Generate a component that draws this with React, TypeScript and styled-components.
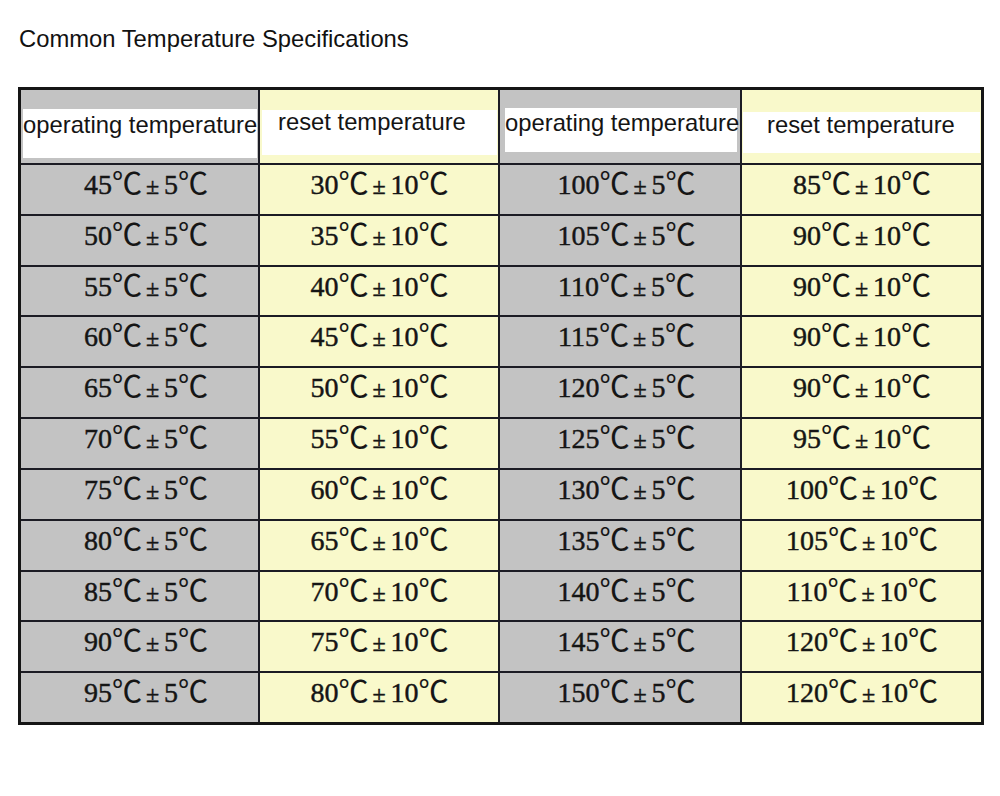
import React from 'react';
import styled, { createGlobalStyle } from 'styled-components';

const GlobalStyle = createGlobalStyle`
  html, body {
    margin: 0;
    padding: 0;
    background: #ffffff;
  }
  body {
    font-family: "Liberation Sans", Arial, sans-serif;
    color: #111111;
  }
`;

const Page = styled.div`
  width: 1000px;
  height: 796px;
  padding: 25px 0 0 19px;
  box-sizing: border-box;
`;

const Title = styled.h1`
  margin: 0;
  font-family: "Liberation Sans", Arial, sans-serif;
  font-weight: 400;
  font-size: 23.8px;
  line-height: 28px;
  color: #111111;
`;

const Frame = styled.div`
  margin: 34px 0 0 -1px;
  width: 966px;
  height: 638px;
  box-sizing: border-box;
  border: 3px solid #151515;
  background: #1c1c24;
  display: grid;
  grid-template-columns: 237px 238px 240px 1fr;
  grid-template-rows: 73px repeat(11, 1fr);
  gap: 2px;
`;

const HeadCell = styled.div<{ $tone: 'gray' | 'yellow' }>`
  background: ${p => (p.$tone === 'gray' ? '#c3c3c3' : '#f9f9cb')};
  display: flex;
  flex-direction: column;
`;

const Label = styled.div<{ $box: [number, number, number, number]; $pad: [number, number] }>`
  margin: ${p => `${p.$box[0]}px ${p.$box[1]}px ${p.$box[2]}px ${p.$box[3]}px`};
  flex: 1;
  background: #ffffff;
  font-family: "Liberation Sans", Arial, sans-serif;
  font-size: 23.8px;
  line-height: 20px;
  white-space: nowrap;
  padding: ${p => `${p.$pad[0]}px 0 0 ${p.$pad[1]}px`};
  color: #141414;
`;

const Cell = styled.div<{ $tone: 'gray' | 'yellow'; $shift: number }>`
  background: ${p => (p.$tone === 'gray' ? '#c3c3c3' : '#f9f9cb')};
  display: flex;
  justify-content: center;
  align-items: flex-start;
  padding: 2px 0 0 ${p => p.$shift}px;
  box-sizing: border-box;
  font-family: "Liberation Serif", "Times New Roman", serif;
  font-size: 28px;
  line-height: 28px;
  color: #151515;
  -webkit-text-stroke: 0.45px #151515;
  white-space: nowrap;
`;

const Deg = styled.span`
  font-family: "Noto Sans CJK SC", sans-serif;
  font-weight: 400;
  font-size: 30px;
  letter-spacing: -1px;
  -webkit-text-stroke: 0.1px #151515;
`;

const PlusMinus = styled.span`
  font-size: 24px;
  margin: 0 5px;
`;

type Col = {
  label: string;
  tone: 'gray' | 'yellow';
  box: [number, number, number, number];
  pad: [number, number];
  shift: number;
  tol: number;
  values: number[];
};

const columns: Col[] = [
  {
    label: 'operating temperature',
    tone: 'gray',
    box: [19, 1, 5, 2],
    pad: [6, 0],
    shift: 12,
    tol: 5,
    values: [45, 50, 55, 60, 65, 70, 75, 80, 85, 90, 95],
  },
  {
    label: 'reset temperature',
    tone: 'yellow',
    box: [20, 1, 8, 2],
    pad: [2, 16],
    shift: 0,
    tol: 10,
    values: [30, 35, 40, 45, 50, 55, 60, 65, 70, 75, 80],
  },
  {
    label: 'operating temperature',
    tone: 'gray',
    box: [18, 3, 11, 5],
    pad: [5, 0],
    shift: 12,
    tol: 5,
    values: [100, 105, 110, 115, 120, 125, 130, 135, 140, 145, 150],
  },
  {
    label: 'reset temperature',
    tone: 'yellow',
    box: [22, 1, 10, 1],
    pad: [3, 24],
    shift: 0,
    tol: 10,
    values: [85, 90, 90, 90, 90, 95, 100, 105, 110, 120, 120],
  },
];

const Temp = ({ value, tol }: { value: number; tol: number }) => (
  <span>
    {value}
    <Deg>℃</Deg>
    <PlusMinus>±</PlusMinus>
    {tol}
    <Deg>℃</Deg>
  </span>
);

export default function App() {
  const rows = columns[0].values.map((_, i) => i);
  return (
    <>
      <GlobalStyle />
      <Page>
        <Title>Common Temperature Specifications</Title>
        <Frame>
          {columns.map((c, i) => (
            <HeadCell key={'h' + i} $tone={c.tone}>
              <Label $box={c.box} $pad={c.pad}>
                {c.label}
              </Label>
            </HeadCell>
          ))}
          {rows.map(r =>
            columns.map((c, i) => (
              <Cell key={r + '-' + i} $tone={c.tone} $shift={c.shift}>
                <Temp value={c.values[r]} tol={c.tol} />
              </Cell>
            ))
          )}
        </Frame>
      </Page>
    </>
  );
}
